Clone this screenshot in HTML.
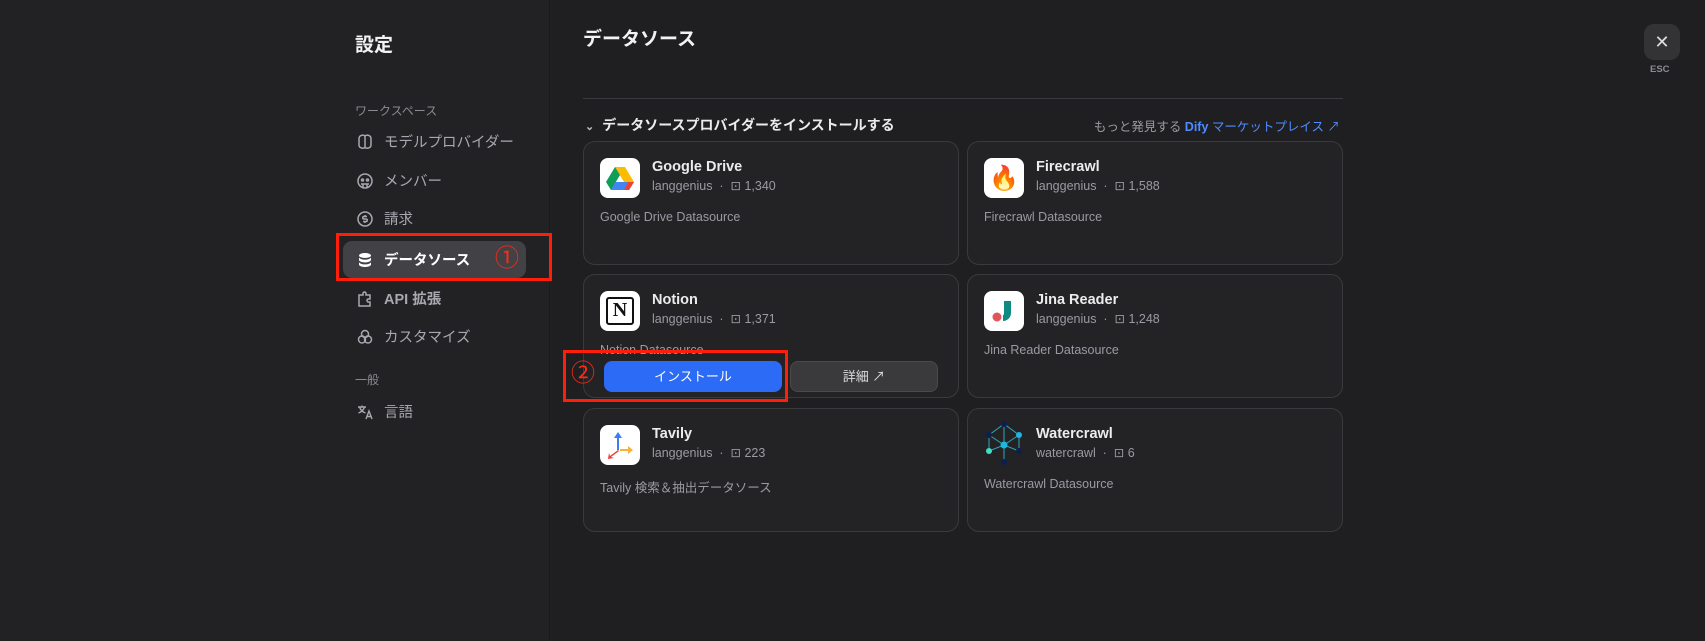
<!DOCTYPE html>
<html><head><meta charset="utf-8"><style>
*{box-sizing:border-box;margin:0;padding:0}
body{width:1705px;height:641px;background:#222224;font-family:"Liberation Sans","Noto Sans CJK JP",sans-serif;position:relative;overflow:hidden;color:#f0f0f2}
.abs{position:absolute}
.side{left:0;top:0;width:550px;height:641px;background:#222224;border-right:1px solid #1a1a1c}
.main{left:551px;top:0;width:1154px;height:641px;background:#1f1f21}
.t1{left:355px;top:30px;font-size:19px;font-weight:bold;color:#f2f2f4}
.sec{left:355px;font-size:12px;color:#8a8a92}
.item{left:343px;width:183px;height:37px;border-radius:9px;display:flex;align-items:center;padding-left:13px;font-size:14.5px;color:#a8a8b0;white-space:nowrap}
.item svg{width:18px;height:18px;margin-right:10px;flex:none}
.item.sel{background:#424246;color:#fff;font-weight:bold}
.red{border:3px solid #ff1e0a}
.card{width:376px;height:124px;border:1px solid #3a3a3e;border-radius:12px;background:#232326}
.ic{left:16px;top:16px;width:40px;height:40px;border-radius:8px;background:#fff;display:flex;align-items:center;justify-content:center}
.nm{left:68px;top:17px;font-size:14.5px;font-weight:bold;color:#ececee}
.mt{left:68px;top:36px;font-size:12.5px;color:#9a9aa2}
.ds{left:16px;top:68px;font-size:12.5px;color:#9a9aa2}
</style></head><body>
<div class="abs side"></div>
<div class="abs main"></div>
<div class="abs t1">設定</div>
<div class="abs sec" style="top:102px">ワークスペース</div>
<div class="abs item" style="top:123px"><svg viewBox="0 0 18 18" fill="none" stroke="#a8a8b0" stroke-width="1.5"><path d="M9 3c-2-1.5-6-1-6 3v6c0 3 4 4 6 2.5M9 3c2-1.5 6-1 6 3v6c0 3-4 4-6 2.5M9 3v11.5"/></svg>モデルプロバイダー</div>
<div class="abs item" style="top:162px"><svg viewBox="0 0 18 18" fill="none" stroke="#a8a8b0" stroke-width="1.5"><circle cx="9" cy="9" r="7"/><circle cx="6.5" cy="8" r="1"/><circle cx="11.5" cy="8" r="1"/><path d="M5 12h8M7 12v3M11 12v3"/></svg>メンバー</div>
<div class="abs item" style="top:200px"><svg viewBox="0 0 18 18" fill="none" stroke="#a8a8b0" stroke-width="1.5"><circle cx="9" cy="9" r="7"/><path d="M11 6.5H8a1.2 1.2 0 000 2.5h2a1.2 1.2 0 010 2.5H7M9 5v1.5M9 11.5V13"/></svg>請求</div>
<div class="abs item sel" style="top:241px"><svg viewBox="0 0 18 18" fill="#fff"><ellipse cx="9" cy="4.5" rx="6" ry="2.5"/><path d="M3 6.5c1 1.5 3.5 2.2 6 2.2s5-.7 6-2.2v2.8c-1 1.5-3.5 2.2-6 2.2s-5-.7-6-2.2z"/><path d="M3 11.2c1 1.5 3.5 2.2 6 2.2s5-.7 6-2.2v2.3c0 1.4-2.7 2.5-6 2.5s-6-1.1-6-2.5z"/></svg>データソース</div>
<div class="abs" style="left:495px;top:242px;color:#ff2a14;font-size:24px;line-height:34px">①</div>
<div class="abs red" style="left:336px;top:233px;width:216px;height:48px"></div>
<div class="abs item" style="top:280px"><svg viewBox="0 0 18 18" fill="none" stroke="#a8a8b0" stroke-width="1.5"><path d="M3 5h4V3.5a1.5 1.5 0 013 0V5h4v4h-1.5a1.5 1.5 0 000 3H14v4H3z"/></svg><b style="font-weight:bold">API 拡張</b></div>
<div class="abs item" style="top:318px"><svg viewBox="0 0 18 18" fill="none" stroke="#a8a8b0" stroke-width="1.5"><circle cx="9" cy="6" r="3.5"/><circle cx="6" cy="11.5" r="3.5"/><circle cx="12" cy="11.5" r="3.5"/></svg>カスタマイズ</div>
<div class="abs sec" style="top:371px">一般</div>
<div class="abs item" style="top:393px"><svg viewBox="0 0 18 18" fill="none" stroke="#a8a8b0" stroke-width="1.4"><path d="M2 4h8M6 2.5V4M3.5 4c1 3 3 5 6 6M8.5 4c-1 3-3 5-6 6M10 16l3-8 3 8M11 13.5h4"/></svg>言語</div>

<div class="abs" style="left:583px;top:24px;font-size:19px;font-weight:bold;color:#f2f2f4">データソース</div>
<div class="abs" style="left:583px;top:98px;width:760px;height:1px;background:#3a3a3e"></div>
<div class="abs" style="left:585px;top:115px;font-size:14px;font-weight:bold;color:#ececee"><span style="font-size:11px;color:#bbb;margin-right:8px">&#8964;</span>データソースプロバイダーをインストールする</div>
<div class="abs" style="right:365px;top:116px;font-size:12.5px;color:#9a9aa2">もっと発見する <span style="color:#4f8cff;font-weight:bold">Dify</span><span style="color:#4f8cff"> マーケットプレイス ↗</span></div>

<div class="abs" style="left:1644px;top:24px;width:36px;height:36px;border-radius:10px;background:#333336;color:#ddd;font-size:18px;text-align:center;line-height:36px">✕</div>
<div class="abs" style="left:1650px;top:64px;font-size:9.5px;color:#8a8a92;font-weight:bold">ESC</div>

<div class="abs card" style="left:583px;top:141px">
 <div class="abs ic"><svg width="28" height="26" viewBox="0 0 28 26"><path d="M9 2h10l9 15h-10z" fill="#fbbc04"/><path d="M9 2L0 17l5 8 9-15z" fill="#0f9d58"/><path d="M5 25h18l5-8H9z" fill="#4285f4"/><path d="M23 25l5-8h-6l-4 8z" fill="#ea4335"/></svg></div>
 <div class="abs nm">Google Drive</div><div class="abs mt">langgenius &nbsp;·&nbsp; ⊡ 1,340</div>
 <div class="abs ds">Google Drive Datasource</div></div>
<div class="abs card" style="left:967px;top:141px">
 <div class="abs ic" style="font-size:24px">🔥</div>
 <div class="abs nm">Firecrawl</div><div class="abs mt">langgenius &nbsp;·&nbsp; ⊡ 1,588</div>
 <div class="abs ds">Firecrawl Datasource</div></div>
<div class="abs card" style="left:583px;top:274px">
 <div class="abs ic"><div style="width:28px;height:28px;border:2.5px solid #111;border-radius:3px;font-family:'Liberation Serif',serif;font-weight:bold;font-size:20px;color:#111;text-align:center;line-height:23px">N</div></div>
 <div class="abs nm">Notion</div><div class="abs mt">langgenius &nbsp;·&nbsp; ⊡ 1,371</div>
 <div class="abs ds">Notion Datasource</div></div>
<div class="abs card" style="left:967px;top:274px">
 <div class="abs ic"><svg width="26" height="26" viewBox="0 0 26 26"><circle cx="6" cy="19" r="4.5" fill="#e0565b"/><path d="M13 3h7v12a8 8 0 01-8 8v-6a1 1 0 001-1z" fill="#0e8a80"/></svg></div>
 <div class="abs nm">Jina Reader</div><div class="abs mt">langgenius &nbsp;·&nbsp; ⊡ 1,248</div>
 <div class="abs ds">Jina Reader Datasource</div></div>
<div class="abs card" style="left:583px;top:408px">
 <div class="abs ic"><svg width="28" height="30" viewBox="0 0 28 30"><path d="M12 2l-4 6h3v12h2V8h3z" fill="#3d7cf5"/><path d="M14 19h8v-3l5 4-5 4v-3h-8z" fill="#f7b23b"/><path d="M12 20L4 26l-1-3-1 6 6-1-3-1 8-6z" fill="#ee3b3b"/></svg></div>
 <div class="abs nm">Tavily</div><div class="abs mt">langgenius &nbsp;·&nbsp; ⊡ 223</div>
 <div class="abs ds">Tavily 検索＆抽出データソース</div></div>
<div class="abs card" style="left:967px;top:408px">
 <div class="abs" style="left:16px;top:12px"><svg width="40" height="44" viewBox="0 0 40 44" stroke="#2aa8b8" stroke-width="1" fill="none"><path d="M20 3v38M5 14l15 10 15-10M5 30l15-6 15 6M5 14v16M35 14v16M5 14l15-11 15 11"/><circle cx="20" cy="3" r="3" fill="#0b2050" stroke="none"/><circle cx="5" cy="14" r="3" fill="#0b2050" stroke="none"/><circle cx="35" cy="14" r="3" fill="#1fb5e0" stroke="none"/><circle cx="20" cy="24" r="3.5" fill="#1fb5e0" stroke="none"/><circle cx="5" cy="30" r="3" fill="#3ee0c0" stroke="none"/><circle cx="35" cy="30" r="3" fill="#0b2050" stroke="none"/><circle cx="20" cy="41" r="3" fill="#0b2050" stroke="none"/></svg></div>
 <div class="abs nm">Watercrawl</div><div class="abs mt">watercrawl &nbsp;·&nbsp; ⊡ 6</div>
 <div class="abs ds">Watercrawl Datasource</div></div>

<div class="abs" style="left:604px;top:361px;width:178px;height:31px;border-radius:8px;background:#2b6bf5;color:#fff;font-size:13px;text-align:center;line-height:31px">インストール</div>
<div class="abs" style="left:790px;top:361px;width:148px;height:31px;border-radius:8px;background:#3a3a3d;border:1px solid #4a4a4e;color:#ddd;font-size:13px;text-align:center;line-height:29px">詳細 ↗</div>
<div class="abs red" style="left:563px;top:350px;width:225px;height:52px"></div>
<div class="abs" style="left:571px;top:359px;font-size:24px;color:#ff2a14;line-height:30px">②</div>
</body></html>
